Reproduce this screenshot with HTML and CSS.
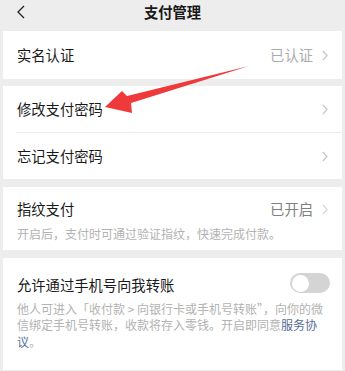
FILE: index.html
```html
<!DOCTYPE html>
<html lang="zh-CN">
<head>
<meta charset="utf-8">
<title>支付管理</title>
<link rel="stylesheet" href="styles.css">
</head>
<body>
<div class="page">
  <header class="nav">
    <div class="nav-left">
      <svg class="back" width="8" height="14" viewBox="0 0 8 14"><polyline points="7,1 1,7 7,13" fill="none" stroke="#222" stroke-width="1.3"/></svg>
    </div>
    <div class="nav-title">支付管理</div>
    <div class="nav-right"></div>
  </header>

  <section class="card">
    <div class="row">
      <span class="label">实名认证</span>
      <span class="value light">已认证</span>
      <svg class="chev" width="6" height="11" viewBox="0 0 6 11"><polyline points="1,1 5,5.5 1,10" fill="none" stroke="#c4c4c4" stroke-width="1.2"/></svg>
    </div>
  </section>

  <section class="card gap7">
    <div class="row half">
      <span class="label">修改支付密码</span>
      <svg class="chev" width="6" height="11" viewBox="0 0 6 11"><polyline points="1,1 5,5.5 1,10" fill="none" stroke="#c4c4c4" stroke-width="1.2"/></svg>
    </div>
    <div class="divider"></div>
    <div class="row half">
      <span class="label">忘记支付密码</span>
      <svg class="chev" width="6" height="11" viewBox="0 0 6 11"><polyline points="1,1 5,5.5 1,10" fill="none" stroke="#c4c4c4" stroke-width="1.2"/></svg>
    </div>
  </section>

  <section class="card gap8 block fp">
    <div class="line">
      <span class="label">指纹支付</span>
      <span class="value dark">已开启</span>
      <svg class="chev" width="6" height="11" viewBox="0 0 6 11"><polyline points="1,1 5,5.5 1,10" fill="none" stroke="#d6d6d6" stroke-width="1.2"/></svg>
    </div>
    <p class="desc">开启后，支付时可通过验证指纹，快速完成付款。</p>
  </section>

  <section class="card gap8 block phone">
    <div class="line">
      <span class="label">允许通过手机号向我转账</span>
      <span class="switch"><span class="knob"></span></span>
    </div>
    <div class="desc wide">
      <div class="dl">他人可进入「收付款 &gt; 向银行卡或手机号转账”，向你的微</div>
      <div class="dl">信绑定手机号转账，收款将存入零钱。开启即同意<span class="link">服务协</span></div>
      <div class="dl"><span class="link">议</span>。</div>
    </div>
  </section>

  <svg class="arrow" width="345" height="371" viewBox="0 0 345 371">
    <polygon points="105,107 122,91 127,96 249,66 131,103 132,113" fill="#f0393a"/>
  </svg>
</div>
</body>
</html>
```
FILE: styles.css
```css
html, body {
  margin: 0;
  padding: 0;
  background: #ededed;
}
body {
  font-family: "Noto Sans CJK SC", "Noto Sans", sans-serif;
  color: #191919;
  font-size: 14.3px;
}
.page {
  position: relative;
  width: 345px;
  height: 371px;
  overflow: hidden;
  padding: 0 3px;
  box-sizing: border-box;
}
.nav {
  height: 31px;
  display: grid;
  grid-template-columns: 1fr auto 1fr;
  align-items: start;
}
.nav-left {
  padding-left: 14px;
  padding-top: 5px;
}
.back { display: block; }
.nav-title {
  font-weight: 600;
  line-height: 20px;
  padding-top: 2px;
}
.card {
  background: #fff;
}
.gap7 { margin-top: 7px; }
.gap8 { margin-top: 8px; }
.row {
  display: flex;
  align-items: center;
  height: 48px;
  padding: 0 14px;
}
.row.half { height: 46px; }
.label { flex: 1; line-height: 20px; }
.value { line-height: 20px; }
.value.light { color: #ababab; }
.value.dark { color: #7f7f7f; }
.chev { margin-left: 9px; display: block; }
.divider {
  height: 1px;
  background: #ececec;
  margin-left: 13px;
}
.block { padding: 0 14px; }
.fp { padding-top: 12px; padding-bottom: 8px; }
.phone { padding-top: 17px; padding-bottom: 20px; }
.line {
  display: flex;
  align-items: center;
  height: 20px;
}
.desc {
  margin: 6px 0 0;
  font-size: 12px;
  line-height: 17px;
  color: #b2b2b2;
}
.desc.wide {
  margin-top: 5.5px;
  line-height: 16.5px;
}
.dl { white-space: nowrap; }
.link { color: #576b95; }
.switch {
  width: 40px;
  height: 20px;
  border-radius: 10px;
  background: #d4d4d4;
  margin-right: -2px;
  margin-top: -4px;
  display: flex;
  align-items: center;
  padding: 0 2px;
  box-sizing: border-box;
}
.knob {
  width: 17px;
  height: 17px;
  border-radius: 50%;
  background: #fff;
}
.arrow {
  position: absolute;
  left: 0;
  top: 0;
  pointer-events: none;
}
```
